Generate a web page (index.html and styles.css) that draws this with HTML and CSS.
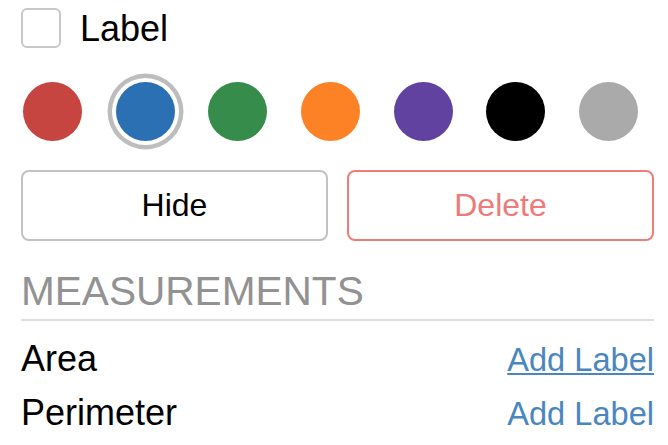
FILE: index.html
```html
<!DOCTYPE html>
<html>
<head>
<meta charset="utf-8">
<link rel="stylesheet" href="styles.css">
</head>
<body>
<div class="panel">
  <label class="check-row">
    <span class="checkbox"></span>
    <span class="check-label">Label</span>
  </label>
  <div class="swatches">
    <span class="swatch red"></span>
    <span class="swatch blue selected"></span>
    <span class="swatch green"></span>
    <span class="swatch orange"></span>
    <span class="swatch purple"></span>
    <span class="swatch black"></span>
    <span class="swatch gray"></span>
  </div>
  <div class="actions">
    <button class="btn">Hide</button>
    <button class="btn btn-danger">Delete</button>
  </div>
  <h2 class="section-title">MEASUREMENTS</h2>
  <div class="measure-list">
    <div class="measure-row">
      <span class="measure-name">Area</span>
      <a class="add-label hover" href="#">Add Label</a>
    </div>
    <div class="measure-row">
      <span class="measure-name">Perimeter</span>
      <a class="add-label" href="#">Add Label</a>
    </div>
  </div>
</div>
</body>
</html>
```

FILE: styles.css
```css
html, body {
  margin: 0;
  padding: 0;
  background: #fff;
}

body {
  font-family: "Liberation Sans", Arial, Helvetica, sans-serif;
  color: #000;
}

.panel {
  padding: 8px 14px 0 21px;
}

.check-row {
  display: flex;
  align-items: center;
  gap: 19px;
  height: 40px;
}

.checkbox {
  width: 40px;
  height: 40px;
  box-sizing: border-box;
  border: 2px solid #c8c8c8;
  border-radius: 6px;
  background: #fff;
}

.check-label {
  font-size: 36px;
  line-height: 40px;
  position: relative;
  top: 1px;
}

.swatches {
  display: flex;
  gap: 33.67px;
  margin-top: 34px;
  padding-left: 2px;
  height: 59px;
}

.swatch {
  width: 59px;
  height: 59px;
  border-radius: 50%;
  flex: none;
}

.swatch.selected {
  box-shadow: 0 0 0 4px #fff, 0 0 0 8.5px #bdbdbd;
}

.red { background: #c64540; }
.blue { background: #2b70b2; }
.green { background: #368c4b; }
.orange { background: #fd8226; }
.purple { background: #6242a0; }
.black { background: #000; }
.gray { background: #aaaaaa; }

.actions {
  display: flex;
  gap: 19px;
  margin-top: 29px;
}

.btn {
  flex: 1;
  height: 71px;
  box-sizing: border-box;
  border: 2px solid #c2c2c2;
  border-radius: 8px;
  background: #fff;
  font-family: "Liberation Sans", Arial, Helvetica, sans-serif;
  font-size: 32px;
  color: #000;
  padding: 0;
}

.btn-danger {
  border-color: #f07c7a;
  color: #ee7b78;
}

.section-title {
  margin: 27px 0 0;
  font-size: 40.6px;
  line-height: 46px;
  font-weight: normal;
  color: #929292;
  padding-bottom: 5px;
  border-bottom: 2px solid #dedede;
}

.measure-list {
  margin-top: 10.5px;
}

.measure-row {
  display: flex;
  justify-content: space-between;
  align-items: baseline;
  height: 54px;
}

.measure-name {
  font-size: 36px;
  line-height: 54px;
}

.add-label {
  font-size: 32.6px;
  line-height: 54px;
  color: #4a86bf;
  text-decoration: none;
}

.add-label.hover {
  text-decoration: underline;
  text-decoration-thickness: 2px;
  text-underline-offset: 2px;
}
```
